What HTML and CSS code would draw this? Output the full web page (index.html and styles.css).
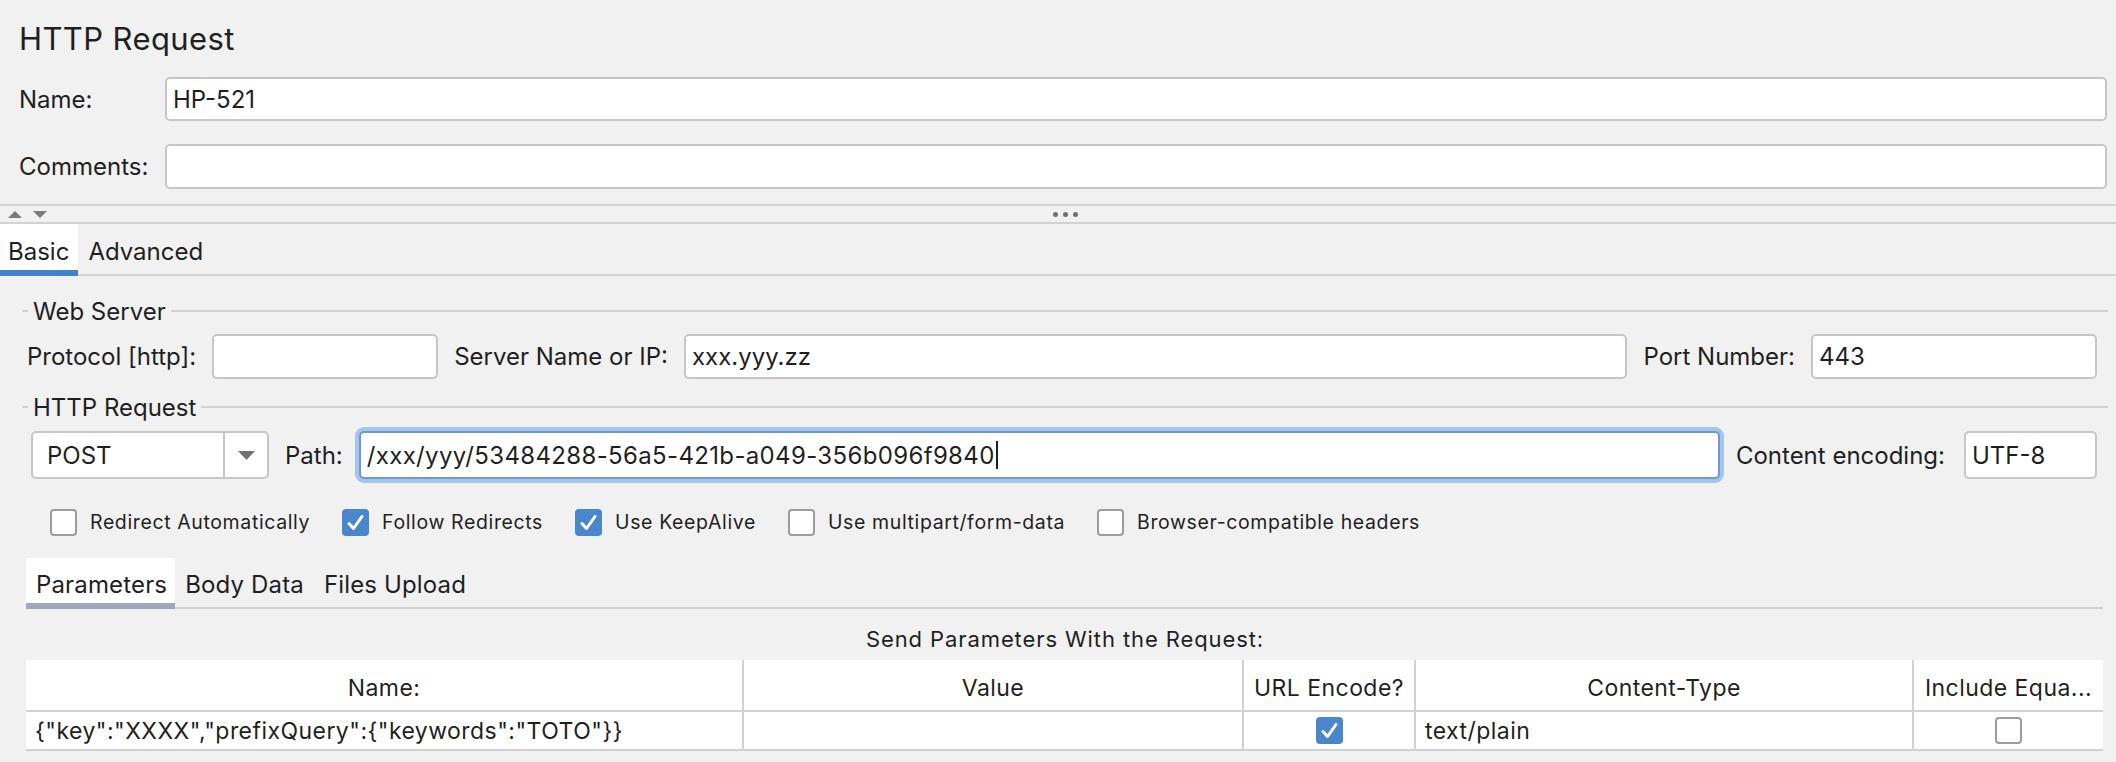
FILE: index.html
```html
<!DOCTYPE html>
<html>
<head>
<meta charset="utf-8">
<link rel="stylesheet" href="styles.css">
</head>
<body>
<div class="header">
  <div class="title">HTTP Request</div>
  <div class="frow name-row"><span class="flabel">Name:</span><div class="tf">HP-521</div></div>
  <div class="frow comments-row"><span class="flabel">Comments:</span><div class="tf"></div></div>
</div>

<div class="splitter">
  <div class="arrows">
    <svg width="14" height="7" viewBox="0 0 14 7"><polygon points="0,7 7,0 14,7" fill="#7b7b7b"/></svg>
    <svg width="14" height="7" viewBox="0 0 14 7"><polygon points="0,0 14,0 7,7" fill="#7b7b7b"/></svg>
  </div>
  <div class="grip"><span></span><span></span><span></span></div>
  <div></div>
</div>

<div class="tabs main-tabs">
  <div class="tab active">Basic</div>
  <div class="tab">Advanced</div>
</div>

<div class="basic">
  <div class="gtitle"><span class="dash"></span><span class="gt">Web Server</span><span class="gline"></span></div>
  <div class="grow row1">
    <span class="lbl">Protocol [http]:</span>
    <div class="tf proto"></div>
    <span class="lbl">Server Name or IP:</span>
    <div class="tf server">xxx.yyy.zz</div>
    <span class="lbl">Port Number:</span>
    <div class="tf port">443</div>
  </div>

  <div class="gtitle gtitle2"><span class="dash"></span><span class="gt">HTTP Request</span><span class="gline"></span></div>
  <div class="grow row2">
    <div class="combo">
      <div class="combo-val">POST</div>
      <div class="combo-btn"><svg width="17" height="9" viewBox="0 0 17 9"><polygon points="0,0 17,0 8.5,9" fill="#737373"/></svg></div>
    </div>
    <span class="lbl">Path:</span>
    <div class="tf path focus">/xxx/yyy/53484288-56a5-421b-a049-356b096f9840<span class="caret"></span></div>
    <span class="lbl">Content encoding:</span>
    <div class="tf enc">UTF-8</div>
  </div>

  <div class="checks">
    <div class="chk"><span class="box"></span><span class="clbl">Redirect Automatically</span></div>
    <div class="chk"><span class="box on"><svg width="27" height="27" viewBox="0 0 27 27"><path d="M7 14.5 L11.5 19.5 L20 7.5" fill="none" stroke="#fff" stroke-width="3" stroke-linecap="round" stroke-linejoin="round"/></svg></span><span class="clbl">Follow Redirects</span></div>
    <div class="chk"><span class="box on"><svg width="27" height="27" viewBox="0 0 27 27"><path d="M7 14.5 L11.5 19.5 L20 7.5" fill="none" stroke="#fff" stroke-width="3" stroke-linecap="round" stroke-linejoin="round"/></svg></span><span class="clbl">Use KeepAlive</span></div>
    <div class="chk"><span class="box"></span><span class="clbl">Use multipart/form-data</span></div>
    <div class="chk"><span class="box"></span><span class="clbl">Browser-compatible headers</span></div>
  </div>

  <div class="tabs sub-tabs">
    <div class="tab active">Parameters</div>
    <div class="tab">Body Data</div>
    <div class="tab">Files Upload</div>
  </div>

  <div class="send">Send Parameters With the Request:</div>

  <div class="table">
    <div class="th">Name:</div>
    <div class="th">Value</div>
    <div class="th">URL Encode?</div>
    <div class="th">Content-Type</div>
    <div class="th last">Include Equa...</div>
    <div class="td">{"key":"XXXX","prefixQuery":{"keywords":"TOTO"}}</div>
    <div class="td"></div>
    <div class="td center"><span class="box on"><svg width="27" height="27" viewBox="0 0 27 27"><path d="M7 14.5 L11.5 19.5 L20 7.5" fill="none" stroke="#fff" stroke-width="3" stroke-linecap="round" stroke-linejoin="round"/></svg></span></div>
    <div class="td">text/plain</div>
    <div class="td center last"><span class="box"></span></div>
  </div>
</div>
</body>
</html>
```
FILE: styles.css
```css
* { box-sizing: border-box; margin: 0; padding: 0; }
html, body { background: #f1f1f1; }
body {
  font-family: Inter, "Noto Sans", sans-serif;
  color: #1f1f1f;
  width: 2116px;
  height: 762px;
  overflow: hidden;
}

/* header */
.header { padding: 17px 9px 15px 19px; }
.title { height: 44px; line-height: 44px; font-size: 31px; letter-spacing: 0.4px; }
.frow { display: flex; align-items: center; font-size: 24px; }
.name-row { margin-top: 16px; height: 44px; }
.comments-row { margin-top: 23px; height: 45px; }
.flabel { width: 146px; flex: none; }

.tf {
  background: #fff;
  border: 2px solid #c6c6c6;
  border-radius: 5px;
  padding: 0 6px;
  display: flex;
  align-items: center;
  font-size: 24px;
  height: 100%;
  white-space: nowrap;
}
.frow .tf { flex: 1; }

/* splitter */
.splitter {
  height: 20px;
  border-top: 2px solid #d2d2d2;
  border-bottom: 2px solid #d2d2d2;
  display: grid;
  grid-template-columns: 1053px 25px 1fr;
  align-items: center;
}
.arrows { display: flex; gap: 11px; padding-left: 8px; align-items: center; }
.arrows svg { display: block; }
.grip { display: flex; gap: 5px; }
.grip span { width: 5px; height: 5px; border-radius: 50%; background: #707070; }

/* tabs */
.tabs { display: flex; box-shadow: inset 0 -2px 0 #d2d2d2; font-size: 24px; }
.tab { line-height: 32px; white-space: nowrap; }
.main-tabs { height: 52px; }
.main-tabs .tab { padding: 12px 10px 0 10px; }
.main-tabs .tab:first-child { padding-left: 8px; padding-right: 9px; }
.main-tabs .tab.active { background: #fff; border-bottom: 6px solid #4481c8; padding-bottom: 2px; }

.sub-tabs { height: 51px; margin: 22px 5px 0 4px; }
.sub-tabs .tab { padding: 11px 10px 0 10px; letter-spacing: 0.15px; }
.sub-tabs .tab.active { background: #fff; border-bottom: 6px solid #9eaabb; padding-bottom: 2px; padding-right: 8px; }

/* groups */
.basic { padding: 23px 8px 0 22px; }
.gtitle { display: flex; align-items: center; height: 24px; font-size: 24px; }
.gtitle2 { margin-top: 16px; }
.dash { width: 6px; height: 2px; background: #d2d2d2; }
.gt { padding: 0 5px; white-space: nowrap; }
.gline { flex: 1; height: 2px; background: #d2d2d2; }

.grow { display: flex; align-items: center; gap: 16px; font-size: 24px; padding-right: 11px; }
.lbl { white-space: nowrap; flex: none; }
.row1 { margin-top: 11px; height: 45px; padding-left: 5px; }
.proto { width: 226px; flex: none; }
.server { flex: 1; }
.port { width: 286px; flex: none; }

.row2 { margin-top: 12px; height: 48px; padding-left: 9px; }
.combo {
  width: 238px; height: 48px; flex: none;
  display: flex;
  background: #fff;
  border: 2px solid #c6c6c6;
  border-radius: 5px;
}
.combo-val {
  width: 192px;
  border-right: 2px solid #c6c6c6;
  padding-left: 14px;
  display: flex; align-items: center;
}
.combo-btn { flex: 1; display: flex; align-items: center; justify-content: center; }
.combo-btn svg { display: block; }
.path { flex: 1; padding-left: 6px; letter-spacing: 0.35px; }
.tf.focus { border-color: #7198cc; box-shadow: 0 0 0 4px #a3c6ee; }
.caret { display: inline-block; width: 2px; height: 28px; background: #1f1f1f; margin-left: 1px; }
.enc { width: 133px; flex: none; margin-left: 3px; }

/* checkboxes */
.checks { display: flex; align-items: center; gap: 32px; margin-top: 29px; height: 28px; padding-left: 28px; }
.chk { display: flex; align-items: center; gap: 13px; }
.clbl { font-size: 19.5px; letter-spacing: 0.62px; white-space: nowrap; }
.box {
  display: block;
  width: 27px; height: 27px;
  background: #fff;
  border: 2px solid #9c9c9c;
  border-radius: 4px;
  flex: none;
}
.box.on { background: #4a86cc; border: none; }
.box svg { display: block; }

/* send label */
.send { margin: 15px 0 6px; height: 30px; line-height: 30px; text-align: center; font-size: 22px; letter-spacing: 0.9px; }

/* table */
.table {
  margin: 0 5px 0 4px;
  display: grid;
  grid-template-columns: 718px 500px 172px 498px 1fr;
  grid-template-rows: 52px 39px;
  background: #fff;
}
.th, .td {
  border-right: 2px solid #d2d2d2;
  border-bottom: 2px solid #d2d2d2;
  display: flex; align-items: center;
  white-space: nowrap;
  overflow: hidden;
}
.th { justify-content: center; font-size: 23px; letter-spacing: 0.45px; padding-top: 6px; }
.td { font-size: 23px; letter-spacing: 0.45px; padding-left: 9px; }
.td.center { justify-content: center; padding-left: 0; }
.th.last, .td.last { border-right: none; }
```
